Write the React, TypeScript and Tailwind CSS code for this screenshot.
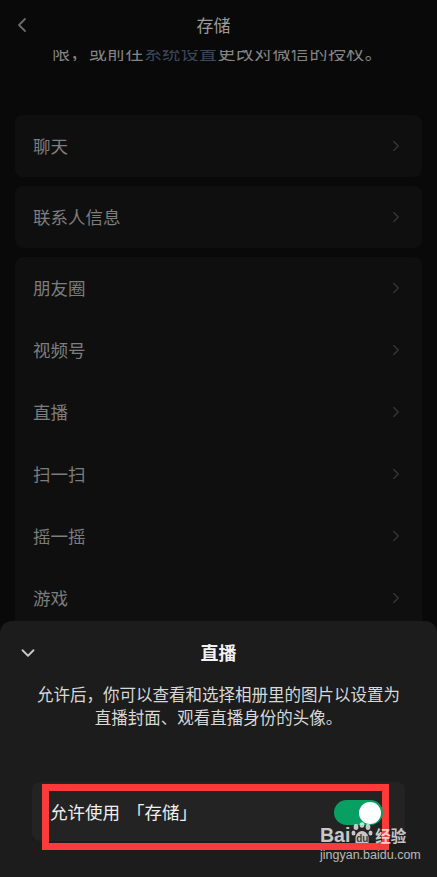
import { ChevronLeft, ChevronRight, ChevronDown } from 'lucide-react'

const font = { fontFamily: '"Noto Sans CJK SC", "Noto Sans", sans-serif' }
const latin = { fontFamily: 'Arial, "Liberation Sans", sans-serif' }

function Row({ label }: { label: string }) {
  return (
    <div className="flex h-[62px] items-center justify-between pl-[18px] pr-[17px]">
      <span className="text-[17.5px] text-[#7d7d7d]">{label}</span>
      <ChevronRight size={18} strokeWidth={1.5} className="text-[#3a3a3a]" />
    </div>
  )
}

function Card({ items }: { items: string[] }) {
  return (
    <div className="mx-[15px] rounded-[8px] bg-[#0f0f0f]">
      {items.map((it) => (
        <Row key={it} label={it} />
      ))}
    </div>
  )
}

export default function App() {
  return (
    <div lang="zh-CN" className="relative h-[877px] w-[437px] overflow-hidden bg-[#090909]" style={font}>
      {/* dimmed page behind the sheet */}
      <div className="flex h-[50px] items-center px-[10px]">
        <ChevronLeft size={24} strokeWidth={1.8} className="text-[#6a6a6a]" />
        <span className="flex-1 pr-[34px] text-center text-[17px] text-[#9a9a9a]">存储</span>
      </div>
      <div className="h-[11px] overflow-hidden">
        <p className="-mt-[7px] pr-[2px] text-center text-[18px] leading-[18px] tracking-[0.4px] text-[#858585]">
          限，或前往<span className="text-[#3c475c]">系统设置</span>更改对微信的授权。
        </p>
      </div>

      <div className="mt-[54px] flex flex-col gap-[9px]">
        <Card items={['聊天']} />
        <Card items={['联系人信息']} />
        <Card items={['朋友圈', '视频号', '直播', '扫一扫', '摇一摇', '游戏', '其他']} />
      </div>

      {/* bottom sheet */}
      <div className="absolute inset-x-0 bottom-0 top-[621px] rounded-t-[12px] bg-[#1c1c1c]">
        <div className="relative flex h-[62px] items-center justify-center">
          <ChevronDown size={22} strokeWidth={2} className="absolute left-[17px] top-[21px] text-[#c8c8c8]" />
          <span className="pt-[1px] text-[18px] font-bold text-[#f2f2f2]">直播</span>
        </div>
        <p className="px-[33px] text-center text-[16.5px] leading-[23px] text-[#d8d8d8]">
          允许后，你可以查看和选择相册里的图片以设置为直播封面、观看直播身份的头像。
        </p>
        <div className="mx-[32px] mt-[53px] flex h-[59px] items-start rounded-[8px] bg-[#232323] pl-[10px]">
          <div className="mt-[2px] flex h-[66px] w-[347px] shrink-0 items-center justify-between border-[7px] border-[#fb3a3a] pb-[9px] pl-[1px]">
            <span className="text-[17.5px] text-[#f0f0f0]">
              允许使用<span className="pl-[7px]">「存储」</span>
            </span>
            <div className="-mr-[1px] flex h-[25px] w-[49px] items-center justify-end rounded-full bg-[#07a062] px-[2px]">
              <div className="h-[22px] w-[22px] rounded-full bg-white" />
            </div>
          </div>
        </div>
      </div>

      {/* watermark */}
      <div className="absolute left-[320px] top-[822px] flex flex-col text-white/75">
        <div className="flex items-end leading-none">
          <span className="text-[19.5px] font-bold leading-[15px]" style={latin}>
            Bai
          </span>
          <div className="relative flex w-[24px] flex-col items-center">
            <svg width="22" height="21" viewBox="0 0 22 21">
              <ellipse cx="5" cy="5" rx="2.4" ry="3" fill="currentColor" />
              <ellipse cx="11" cy="3" rx="2.4" ry="2.8" fill="currentColor" />
              <ellipse cx="17" cy="5" rx="2.4" ry="3" fill="currentColor" />
              <ellipse cx="2.5" cy="11" rx="2" ry="2.5" fill="currentColor" />
              <ellipse cx="19.5" cy="11" rx="2" ry="2.5" fill="currentColor" />
              <path d="M11 9 C7 9 4.5 13 4.5 16 L4.5 21 L17.5 21 L17.5 16 C17.5 13 15 9 11 9 Z" fill="currentColor" />
            </svg>
            <span className="absolute bottom-[-1px] text-[10px] font-bold leading-none text-[#3a3a3a]" style={latin}>
              du
            </span>
          </div>
          <span className="ml-[1px] text-[15.5px] font-bold leading-[15px]">经验</span>
        </div>
        <span className="mt-[6px] text-[12.5px] leading-none text-white/70" style={latin}>
          jingyan.baidu.com
        </span>
      </div>
    </div>
  )
}
